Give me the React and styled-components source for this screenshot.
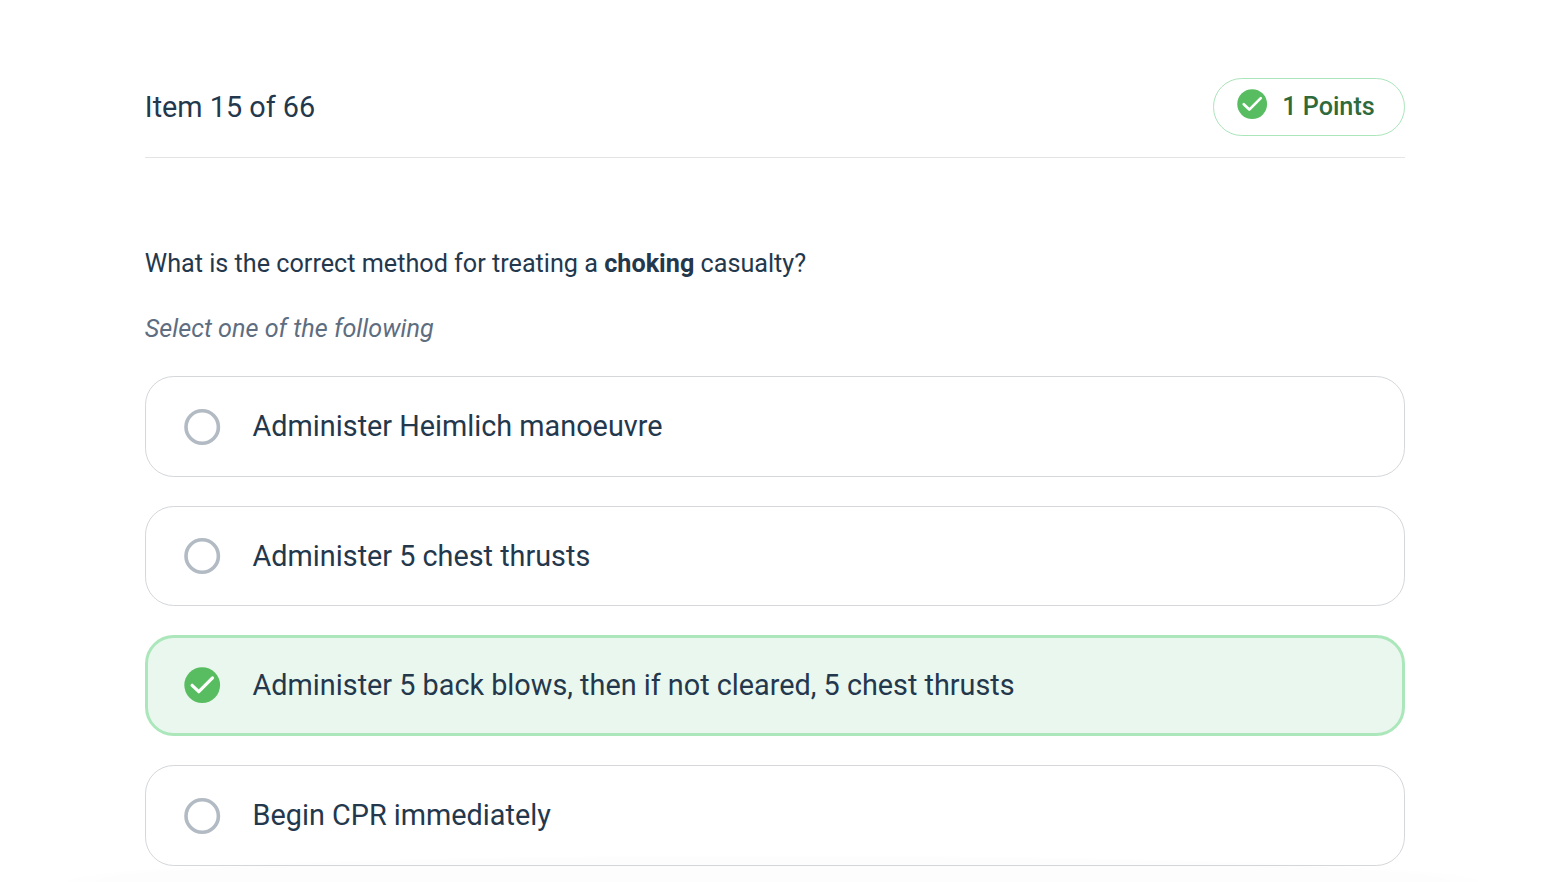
import React from 'react'
import styled, { createGlobalStyle } from 'styled-components'

const answers = [
  { id: 1, text: 'Administer Heimlich manoeuvre' },
  { id: 2, text: 'Administer 5 chest thrusts' },
  { id: 3, text: 'Administer 5 back blows, then if not cleared, 5 chest thrusts', correct: true },
  { id: 4, text: 'Begin CPR immediately' },
]

const CheckCircle = ({ size }) => (
  <Icon width={size} height={size} viewBox="0 0 36 36">
    <circle cx="18.2" cy="18.1" r="17.9" fill="#58bd60" />
    <path
      d="M8.1 18.3 L14.8 24.7 L28.5 10.9"
      fill="none"
      stroke="#fff"
      strokeWidth="3.2"
      strokeLinecap="round"
      strokeLinejoin="round"
    />
  </Icon>
)

const Radio = () => (
  <RadioIcon width={36} height={36} viewBox="0 0 36 36">
    <circle cx="18.2" cy="18" r="16.2" fill="none" stroke="#b2bac3" strokeWidth="3.6" />
  </RadioIcon>
)

const App = () => {
  return (
    <Page>
      <GlobalStyle />
      <Header>
        <Counter>Item 15 of 66</Counter>
        <Points>
          <CheckCircle size={30} />
          <PointsText>1 Points</PointsText>
        </Points>
      </Header>
      <Question>
        What is the correct method for treating a <strong>choking</strong> casualty?
      </Question>
      <Hint>Select one of the following</Hint>
      <Answers>
        {answers.map((answer) => (
          <Answer key={answer.id} $correct={answer.correct}>
            {answer.correct ? <CheckCircle size={36} /> : <Radio />}
            <AnswerText>{answer.text}</AnswerText>
          </Answer>
        ))}
      </Answers>
      <BottomShade />
    </Page>
  )
}

export default App

const GlobalStyle = createGlobalStyle`
  * {
    box-sizing: border-box;
  }
  body {
    margin: 0;
    background: #fff;
    overflow: hidden;
  }
`
const Page = styled.div`
  width: 1260px;
  height: 882px;
  margin-left: 144.8px;
  padding-top: 78px;
  color: #24384d;
  font-family: Roboto, sans-serif;
`
const Header = styled.div`
  display: flex;
  justify-content: space-between;
  height: 80px;
  border-bottom: 1px solid #e3e4e6;
`
const Counter = styled.div`
  font-size: 28.8px;
  line-height: 58px;
`
const Points = styled.div`
  display: flex;
  align-items: center;
  width: 192px;
  height: 58px;
  padding: 0 0 5px 23.2px;
  border: 1px solid #abe5bb;
  border-radius: 28.8px;
`
const PointsText = styled.div`
  margin: 4px 0 0 15.2px;
  color: #2f6a3c;
  font-size: 25.2px;
  font-weight: 500;
  line-height: 30px;
  white-space: nowrap;
`
const Question = styled.div`
  margin-top: 90px;
  font-size: 25.2px;
  line-height: 32px;
`
const Hint = styled.div`
  margin-top: 33px;
  color: #5e6d7f;
  font-size: 25.2px;
  font-style: italic;
  line-height: 32px;
`
const Answers = styled.div`
  display: flex;
  flex-direction: column;
  gap: 28.8px;
  margin-top: 31px;
`
const Answer = styled.div`
  display: flex;
  align-items: center;
  height: 100.8px;
  padding-left: ${({ $correct }) => ($correct ? '36.4px' : '38.4px')};
  background: ${({ $correct }) => ($correct ? '#eaf7ee' : '#fff')};
  border: ${({ $correct }) => ($correct ? '3px solid #abe7bb' : '1px solid #d5d7da')};
  border-radius: 28.8px;
`
const AnswerText = styled.div`
  margin-left: 32.4px;
  margin-top: -0.4px;
  font-size: 28.8px;
  line-height: 40px;
`
const Icon = styled.svg`
  display: block;
  flex-shrink: 0;
  margin-top: -0.6px;
  overflow: visible;
`
const RadioIcon = styled(Icon)`
  margin-top: 0.8px;
`
// soft shade that rises over the last card
const BottomShade = styled.div`
  position: fixed;
  left: 0;
  right: 0;
  bottom: 0;
  height: 27px;
  background: radial-gradient(ellipse 720px 27px at 50% 100%, rgba(0, 0, 0, 0.007) 92%, transparent 100%);
  pointer-events: none;
`
